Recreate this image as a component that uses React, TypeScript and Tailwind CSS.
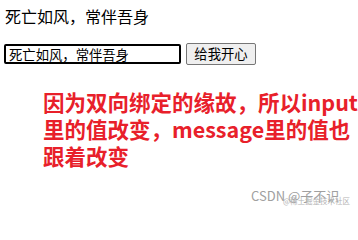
import React, { useState } from 'react';

const cjk = '"Noto Sans CJK SC", "Noto Sans", sans-serif';

export default function App() {
  const [message, setMessage] = useState('死亡如风，常伴吾身');

  return (
    <div
      className="relative h-[212px] w-[358px] overflow-hidden bg-white pl-[5px] pt-[4px] text-black"
      style={{ fontFamily: cjk }}
    >
      <p className="text-[16px] leading-[24px]">{message}</p>

      <div className="mt-[15px] flex items-center gap-[5px]">
        <input
          value={message}
          onChange={(e) => setMessage(e.target.value)}
          className="-ml-[1px] h-[20px] w-[177px] rounded-[2px] border-2 border-black px-[3px] text-[13.33px] leading-[16px] outline-none"
        />
        <button className="h-[22px] w-[70px] rounded-[2px] border border-[#767676] bg-[#efefef] text-[13.33px] leading-[16px]">
          给我开心
        </button>
      </div>

      <div className="mt-[23px] pl-[38px] text-[21.5px] font-bold leading-[27px] text-[#e8202a]">
        <div>因为双向绑定的缘故，所以input</div>
        <div>里的值改变，message里的值也</div>
        <div>跟着改变</div>
      </div>

      <div className="absolute left-[251px] top-[188px] text-[13px] leading-[16px] text-[#a0a0a0]">
        CSDN @子不识
      </div>
      <div className="absolute left-[283px] top-[196px] text-[7.5px] leading-[10px] text-[#b4b4b4]">
        @稀土掘金技术社区
      </div>
    </div>
  );
}
